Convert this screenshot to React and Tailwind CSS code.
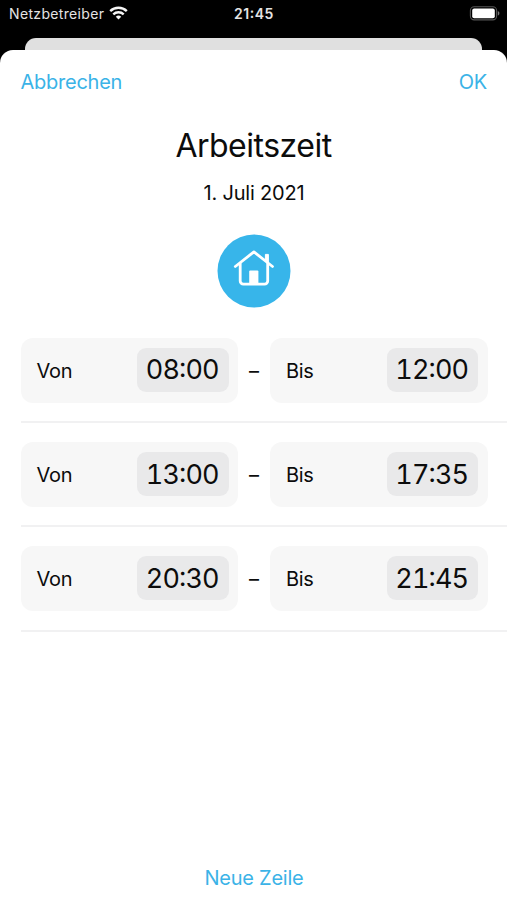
import React from "react";

const rows = [
  { from: "08:00", to: "12:00" },
  { from: "13:00", to: "17:35" },
  { from: "20:30", to: "21:45" },
];

function StatusBar() {
  return (
    <div className="grid h-[38px] grid-cols-3 items-start bg-black pl-[9px] pr-[7px] pt-1 text-[14px] leading-5 text-[#e4e4e4]">
      <div className="flex items-center gap-[5px]">
        <span className="tracking-[0.34px]">Netzbetreiber</span>
        <svg width="19" height="14" viewBox="0 0 19 14" className="-mt-[2px] shrink-0" fill="none" stroke="#f5f5f5">
          <path d="M1.2 5.2a11.8 11.8 0 0 1 16.6 0" strokeWidth="2.4" />
          <path d="M4.3 8.4a7.4 7.4 0 0 1 10.4 0" strokeWidth="2.3" />
          <path d="M9.5 13.6 6.8 10.8a3.9 3.9 0 0 1 5.4 0Z" fill="#f5f5f5" stroke="none" />
        </svg>
      </div>
      <div className="-ml-px text-center font-semibold tracking-[0.55px]">
        21<span className="inline-block -translate-y-px">:</span>45
      </div>
      <div className="flex justify-end pt-[2px]">
        <svg width="31" height="15" viewBox="0 0 31 15">
          <rect x="1.4" y="0.7" width="26.2" height="13.2" rx="3.8" fill="none" stroke="#555" strokeWidth="1.1" />
          <rect x="3.2" y="2.4" width="22.6" height="9.8" rx="2" fill="#fff" />
          <path d="M28.8 5v4.600c1-.4 1.600-1.300 1.600-2.300s-.6-1.900-1.600-2.300Z" fill="#777" />
        </svg>
      </div>
    </div>
  );
}

function TimeField({ label, time }) {
  const [hours, minutes] = time.split(":");
  return (
    <div className="flex h-[65px] w-[217.5px] items-center justify-between rounded-[12px] bg-[#f7f7f7] pl-4 pr-[9.5px]">
      <span className="pt-px text-[20px] tracking-[-0.3px]">{label}</span>
      <span className="flex h-[44px] w-[91.5px] -translate-y-px items-center justify-center rounded-[9px] bg-[#e9e9ea] pr-[1px] pt-[2px] text-[27px] tabular-nums tracking-[-0.9px]">
        <span>{hours}</span>
        <span className="-translate-y-[2px]">:</span>
        <span>{minutes}</span>
      </span>
    </div>
  );
}

export default function App() {
  return (
    <div className="flex h-[900px] w-[507px] flex-col overflow-hidden bg-black font-['Inter',sans-serif] text-[#0c0c0c]">
      <StatusBar />
      <div className="mx-[25px] h-3 shrink-0 rounded-t-[11px] bg-[#e0e0e0]" />
      <main className="flex flex-1 flex-col rounded-t-[13px] bg-white">
        <header className="flex justify-between pl-[20.500px] pr-[20px] pt-5 text-[20px] leading-6 tracking-[-0.25px] text-[#3bb3e7]">
          <button>Abbrechen</button>
          <button>OK</button>
        </header>
        <h1 className="mt-[32px] text-center text-[32px] leading-10 tracking-[-0.5px]">Arbeitszeit</h1>
        <p className="mt-[15px] pl-px text-center text-[20px] leading-6 tracking-[-0.2px]">1. Juli 2021</p>
        <svg className="mx-auto mt-[29px] shrink-0" width="74" height="74" viewBox="0 0 74 74" fill="none">
          <circle cx="37" cy="37" r="36.5" fill="#37b5ea" />
          <g stroke="#fff" strokeWidth="2.800" strokeLinecap="round" strokeLinejoin="round">
            <path d="M18.300 32.500 36.900 17.900 55.500 32.500" />
            <path d="M23.200 29.500V47a3.200 3.200 0 0 0 3.200 3.200H47.500a3.200 3.200 0 0 0 3.200-3.200V29.500" />
          </g>
          <path d="M48.400 20.400h3v9l-3-2.400Z" fill="#fff" stroke="#fff" />
          <path d="M32.200 51V37.400a1 1 0 0 1 1-1h7.200a1 1 0 0 1 1 1V51Z" fill="#fff" />
        </svg>
        <ul className="mt-[11px] pl-[20.5px]">
          {rows.map((row) => (
            <li key={row.from} className="flex h-[104.2px] items-center border-b-2 border-[#f1f1f2] pt-px">
              <TimeField label="Von" time={row.from} />
              <span className="w-8 text-center text-[20px]">–</span>
              <TimeField label="Bis" time={row.to} />
            </li>
          ))}
        </ul>
        <button className="mx-auto mb-[10px] mt-auto pl-px text-[20px] leading-6 tracking-[-0.25px] text-[#3bb3e7]">Neue Zeile</button>
      </main>
    </div>
  );
}
